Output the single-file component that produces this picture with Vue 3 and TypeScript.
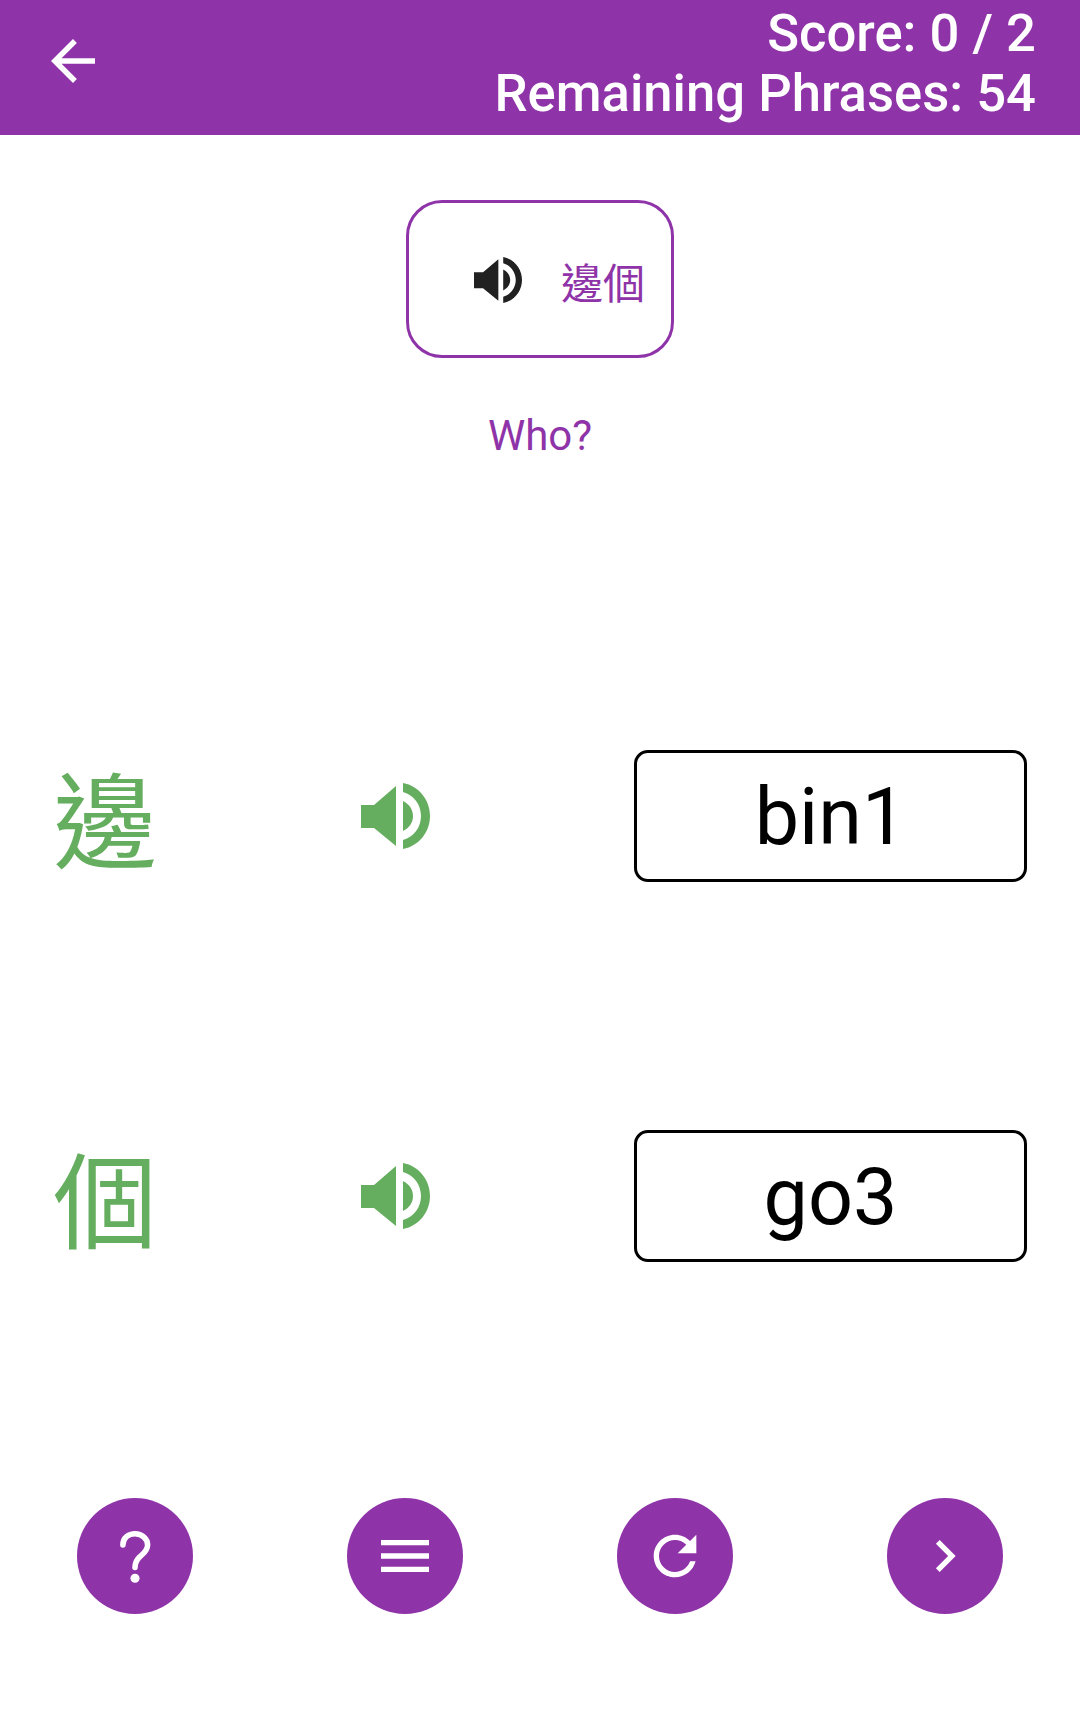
<template>
  <div class="page">
    <header class="app-bar">
      <button class="back-btn">
        <svg viewBox="0 0 24 24" class="back-icon"><path d="M20 11H7.83l5.59-5.59L12 4l-8 8 8 8 1.41-1.41L7.83 13H20v-2z" /></svg>
      </button>
      <div class="score">
        <div>Score: 0 / 2</div>
        <div>Remaining Phrases: 54</div>
      </div>
    </header>

    <main class="content">
      <div class="phrase-box">
        <svg viewBox="0 0 69 66" class="speaker speaker-dark"><path :d="speakerPath" /></svg>
        <span class="phrase-text">邊個</span>
      </div>
      <p class="meaning">Who?</p>

      <div class="rows">
        <div v-for="row in rows" :key="row.char" class="row">
          <span class="char">{{ row.char }}</span>
          <div class="speaker-cell">
            <svg viewBox="0 0 69 66" class="speaker speaker-green"><path :d="speakerPath" /></svg>
          </div>
          <div class="answer">{{ row.jyutping }}</div>
        </div>
      </div>
    </main>

    <footer class="actions">
      <div v-for="action in actions" :key="action.name" class="action-cell">
        <button class="fab">
          <svg v-if="action.name === 'help'" viewBox="0 0 115 115" class="fab-icon">
            <path class="help-stroke" d="M45.5 46.5C45.5 39.5 51 35.5 57.5 35.5C64.5 35.5 70 40.5 70 46.5C70 52.5 65.5 55 62 58.5C59 61.5 57.5 64 57.5 69" />
            <circle cx="57.5" cy="79.5" r="4.5" fill="#fff" />
          </svg>
          <svg v-else viewBox="0 0 24 24" class="fab-icon md"><path :d="action.path" fill="#fff" /></svg>
        </button>
      </div>
    </footer>
  </div>
</template>

<script setup lang="ts">
interface Row {
  char: string;
  jyutping: string;
}

interface Action {
  name: string;
  path?: string;
}

const speakerPath =
  'M0 22H13L35 3V63L13 45H0ZM42 18C48 21 52 26 52 33S48 45 42 48ZM42 0C58 3 69 17 69 33S58 63 42 66V57C53 54 60 44 60 33S53 12 42 9Z';

const rows: Row[] = [
  { char: '邊', jyutping: 'bin1' },
  { char: '個', jyutping: 'go3' },
];

const actions: Action[] = [
  { name: 'help' },
  { name: 'menu', path: 'M3 18h18v-2H3v2zm0-5h18v-2H3v2zm0-7v2h18V6H3z' },
  {
    name: 'refresh',
    path: 'M17.65 6.35C16.2 4.9 14.21 4 12 4c-4.42 0-7.99 3.58-7.99 8s3.57 8 7.99 8c3.73 0 6.84-2.55 7.73-6h-2.08c-.82 2.33-3.04 4-5.65 4-3.31 0-6-2.69-6-6s2.69-6 6-6c1.66 0 3.14.69 4.22 1.78L13 11h7V4l-2.35 2.35z',
  },
  { name: 'next', path: 'M10 6L8.59 7.41 13.17 12l-4.58 4.59L10 18l6-6z' },
];
</script>

<style scoped>
.page {
  width: 1080px;
  height: 1717px;
  display: flex;
  flex-direction: column;
  background: #fff;
  font-family: Roboto, 'Noto Sans CJK TC', sans-serif;
}
.app-bar {
  height: 135px;
  flex: none;
  background: #8f33a8;
  display: flex;
  align-items: center;
  justify-content: space-between;
  padding: 0 44px 0 40px;
  box-sizing: border-box;
}
.back-btn {
  border: none;
  background: none;
  padding: 0;
  display: flex;
  margin-top: -14px;
}
.back-icon {
  width: 66px;
  height: 66px;
  fill: #fff;
}
.score {
  color: #fff;
  font-size: 52.6px;
  font-weight: 500;
  line-height: 60px;
  text-align: right;
  margin-top: -9px;
}
.content {
  flex: 1;
  display: flex;
  flex-direction: column;
  align-items: center;
}
.phrase-box {
  width: 268px;
  height: 158px;
  margin-top: 65px;
  box-sizing: border-box;
  border: 3px solid #8f33a8;
  border-radius: 36px;
  padding-left: 65px;
  display: flex;
  align-items: center;
  gap: 39px;
}
.speaker {
  display: block;
  flex: none;
}
.speaker-dark {
  width: 48px;
  height: 46px;
  fill: #212121;
  margin-top: 2px;
}
.speaker-green {
  width: 69px;
  height: 66px;
  fill: #66ae5f;
}
.phrase-text {
  color: #8f33a8;
  font-size: 42px;
  line-height: 48px;
  white-space: nowrap;
  margin-top: 12px;
}
.meaning {
  margin: 53px 0 0;
  color: #8f33a8;
  font-size: 42px;
  line-height: 49px;
}
.rows {
  width: 100%;
  margin-top: 290px;
  display: flex;
  flex-direction: column;
  gap: 248px;
}
.row {
  display: grid;
  grid-template-columns: 238px 209px 393px;
  grid-template-rows: 132px;
  align-items: center;
  padding-left: 53px;
}
.char {
  color: #66ae5f;
  font-size: 104px;
  height: 132px;
  line-height: 152px;
}
.speaker-cell {
  display: flex;
  justify-content: center;
}
.answer {
  margin-left: 134px;
  width: 393px;
  height: 132px;
  box-sizing: border-box;
  border: 3px solid #000;
  border-radius: 14px;
  padding-top: 2px;
  color: #000;
  font-size: 79px;
  display: flex;
  align-items: center;
  justify-content: center;
}
.actions {
  flex: none;
  display: grid;
  grid-template-columns: repeat(4, 270px);
  padding-bottom: 103px;
}
.action-cell {
  display: flex;
  justify-content: center;
}
.fab {
  width: 116px;
  height: 116px;
  border: none;
  border-radius: 50%;
  background: #8f33a8;
  padding: 0;
  display: flex;
  align-items: center;
  justify-content: center;
}
.fab-icon {
  width: 116px;
  height: 116px;
}
.fab-icon.md {
  width: 64px;
  height: 64px;
}
.help-stroke {
  fill: none;
  stroke: #fff;
  stroke-width: 5.5;
  stroke-linecap: round;
}
</style>

<style>
html,
body {
  margin: 0;
  background: #fff;
}
</style>
